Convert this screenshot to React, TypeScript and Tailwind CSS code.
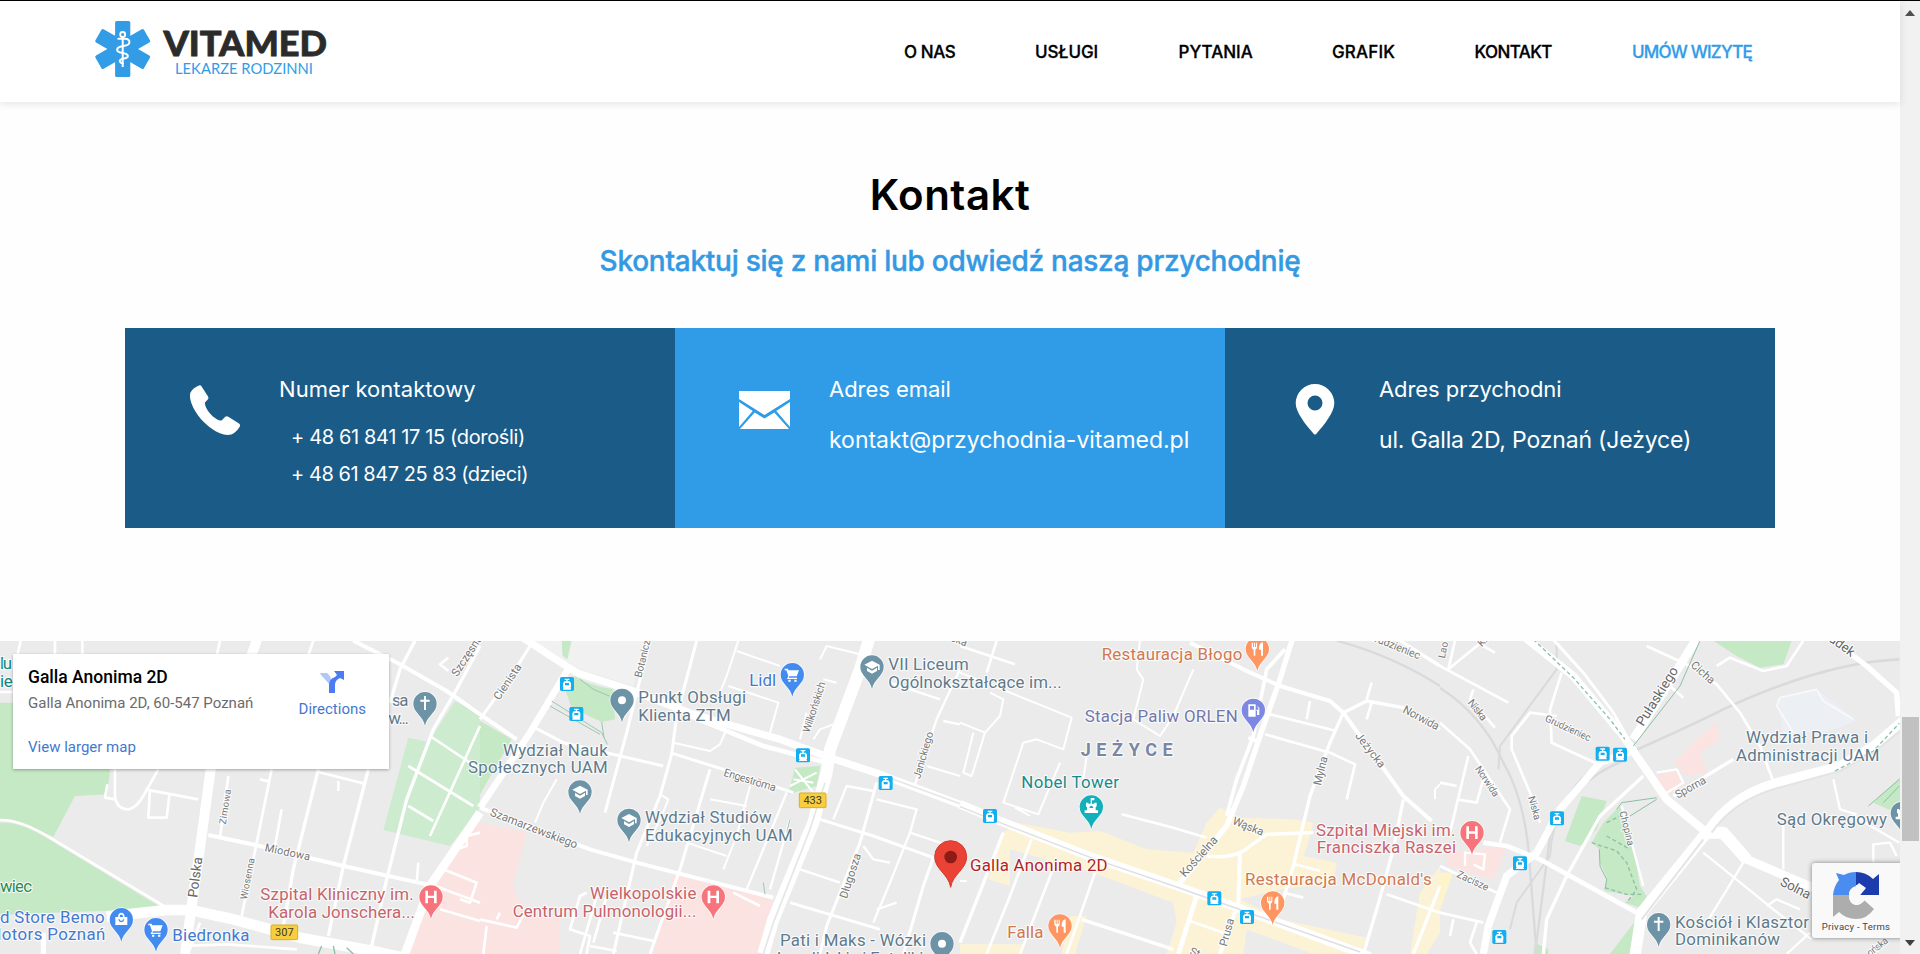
import type { ReactNode } from "react";

/* ---------- map geometry: four tiles, 3 units per pixel ---------- */
const TILES = [0, 480, 960, 1440];
const GREEN = "#c5e8c5";
const PINK = "#fbe3e2";
const SAND = "#fcf3d6";

type Area = { t: number; c: string; d: string };
const AREAS: Area[] = [
  { t: 0, c: GREEN, d: "M0 200H60L330 400L322 475L225 480L160 602L120 585Q60 550 0 548Z" },
  { t: 0, c: GREEN, d: "M0 560Q60 555 150 612L480 812L440 820L0 836Z" },
  { t: 0, c: "#cdebce", d: "M1365 195L1440 235V515L1350 630L1150 582L1225 305L1285 318Z" },
  { t: 0, c: PINK, d: "M1440 540L1290 760L1215 954H1440Z" },
  { t: 1, c: "#f1f1f1", d: "M160 14H500L460 150L300 100Z" },
  { t: 1, c: GREEN, d: "M245 14H275L262 70L248 60Z" },
  { t: 1, c: GREEN, d: "M285 120Q330 150 400 160L405 250L365 258L275 215L255 160Z" },
  { t: 1, c: GREEN, d: "M0 255L95 310L0 475Z" },
  { t: 1, c: PINK, d: "M0 560L140 590L100 750Q120 840 240 850V954H0Z" },
  { t: 1, c: PINK, d: "M580 715L880 790L840 954H520L560 800Z" },
  { t: 1, c: GREEN, d: "M945 395L1020 390L1010 450L925 475Z" },
  { t: 2, c: SAND, d: "M130 590L170 560L330 590L420 585L560 640L700 650L740 560L780 515L840 545L1000 550L1060 560L1050 600L1030 660L1130 680L1120 740L960 760L840 790L960 850L1220 905L1200 954H1060L860 880L850 954H620L650 860L640 800L400 710L150 640L150 750L85 730Z" },
  { t: 2, c: SAND, d: "M1380 770L1440 690V890L1400 954H1350Z" },
  { t: 2, c: SAND, d: "M380 840L345 954H305L330 840Z" },
  { t: 2, c: SAND, d: "M0 925H190V954H0Z" },
  { t: 3, c: GREEN, d: "M820 14H1055L1030 85L960 95L890 60Z" },
  { t: 3, c: GREEN, d: "M425 480L500 495L470 580L420 630L375 615Z" },
  { t: 3, c: GREEN, d: "M540 510L575 600L600 750L620 780L600 815L555 800L580 780L495 765L500 720L480 680L478 640L455 620L490 560Z" },
  { t: 3, c: GREEN, d: "M1380 425L1300 500L1380 535Z" },
  { t: 3, c: GREEN, d: "M590 850L510 954H600Z" },
  { t: 3, c: GREEN, d: "M285 920L325 940V954H280Z" },
  { t: 3, c: PINK, d: "M830 260L840 310L780 350L800 410L740 420L700 380L770 310Z" },
  { t: 3, c: PINK, d: "M650 410L710 400L730 450L660 490Z" },
  { t: 3, c: PINK, d: "M20 650L200 630L160 730L20 690Z" },
  { t: 3, c: "#fdf5c9", d: "M0 710L40 710L0 820Z" },
  { t: 3, c: "#eceff4", d: "M1010 190L1130 160L1250 255L1150 290L1030 290Z" },
];

type Road = { t: number; w: number; d: string; c?: string; dash?: string };
const RAILS: Road[] = [
  { t: 2, w: 7, d: "M1130 14Q1300 60 1440 150" },
  { t: 3, w: 7, d: "M0 155Q130 240 190 380Q260 500 270 700L290 954" },
  { t: 3, w: 6, d: "M350 14L350 100L180 330L175 400" },
  { t: 3, w: 8, d: "M570 350Q750 270 850 220Q1150 80 1378 70" },
  { t: 3, w: 7, d: "M560 370Q380 440 330 600L285 954" },
  { t: 3, w: 6, d: "M480 380Q340 480 330 660L230 800L210 880" },
];
const ROADS: Road[] = [
  { t: 0, w: 8, d: "M0 552Q60 550 150 605L500 815M345 400L345 480Q350 520 385 520Q410 515 430 480L475 400M345 490L315 485L322 445M435 460L595 490M450 460L445 545L500 545L508 478M0 168H60" },
  { t: 0, w: 30, d: "M775 0L632 400L605 600L575 810L555 954" },
  { t: 0, w: 32, d: "M320 842L500 822L570 822L700 850L900 905L1120 945L1210 965" },
  { t: 0, w: 12, d: "M625 597L780 630L1030 690L1280 745" },
  { t: 0, w: 8, d: "M660 605L685 420M815 400L770 620L725 840M780 430L808 436M955 408L1090 442M1015 435V465M845 520L825 630M940 14L900 130M660 14L650 60M62 14L52 60M165 14V60M247 14V60M1255 680L1250 740M600 860L570 940M545 930L680 925L890 940" },
  { t: 0, w: 10, d: "M955 400L880 700L850 870M1105 400L1030 690L985 900M1245 14L1200 100L1170 200M1440 30L1370 160L1300 280L1220 490L1160 730L1115 930" },
  { t: 0, w: 12, d: "M1060 14L1200 85L1340 165L1440 235L1550 310" },
  { t: 0, w: 8, d: "M1440 270L1290 600M1290 300L1440 400M1225 390L1420 510M1225 510L1300 555M1300 748L1440 800M1330 700L1430 740L1410 800L1380 790M1320 820L1440 855M1440 590L1400 600L1400 630L1370 640M1345 65L1320 85L1345 105" },
  { t: 0, w: 26, d: "M1440 530L1290 750L1215 954" },
  { t: 0, w: 16, d: "M130 890V954" },
  { t: 1, w: 12, d: "M0 515L330 640L470 680L880 785" },
  { t: 1, w: 22, d: "M120 0L290 110L460 165L640 235L760 270L900 310L1050 365L1200 415L1440 505" },
  { t: 1, w: 14, d: "M620 235L850 330L1040 380" },
  { t: 1, w: 36, d: "M1170 0L1140 100L1050 340L1040 410L1000 560L880 850L850 954" },
  { t: 1, w: 20, d: "M270 90L150 290L0 515" },
  { t: 1, w: 9, d: "M150 30L100 110L0 250M510 14L480 130L440 290L375 530M650 14L590 240L575 355L540 480L470 650L400 954M690 400L600 700L510 954M570 350L730 400L940 470M155 270L250 320L550 390" },
  { t: 1, w: 6, d: "M775 14L740 120L720 170M770 45L900 90M745 150L895 200L870 290M580 320L690 345L720 325L735 290M1020 70L1040 30L1140 55M1000 310L1020 280L1060 265M1030 130L1070 140M230 430L190 500L165 560M540 475L565 490L545 540L500 630M810 450L770 600L730 700M690 490L800 510M620 620L740 660M960 310L980 230" },
  { t: 1, w: 7, d: "M920 470L800 760M930 550L870 760M1060 550L1100 450L1180 465M1190 490L1310 520L1290 590L1440 640M1440 100L1370 250L1300 460M1340 390L1440 420M1290 590L1230 740L1180 860M960 700L1080 740M1230 140L1380 190M1390 255L1440 265M1150 630L1180 670L1230 680M1190 820L1250 800" },
  { t: 1, w: 9, d: "M1020 550L1180 600L1360 665L1330 750L1270 954M1190 440L1140 620L1040 870L1020 954M930 800L1200 880" },
  { t: 1, w: 8, d: "M0 850L110 875L130 835M20 870L10 954M50 850L60 830M320 770L300 780L270 880L330 900L320 954M350 780L300 954M400 890L520 915M330 930L410 945M380 780L340 920M760 770L840 810" },
  { t: 1, w: 6, d: "M945 400L1000 470M930 450L1010 410M940 430L1000 440" },
  { t: 2, w: 26, d: "M0 505L120 555L400 665L650 750L860 825L1230 962" },
  { t: 2, w: 16, d: "M1000 0L960 130L900 300L850 450L800 570L660 740" },
  { t: 2, w: 11, d: "M975 40L920 100L880 300L830 430L800 540M865 305L890 315" },
  { t: 2, w: 14, d: "M710 780L655 954" },
  { t: 2, w: 12, d: "M690 20L850 100L960 150L1110 195L1150 230L1200 300L1330 480L1415 555M840 650L835 800L780 954" },
  { t: 2, w: 10, d: "M1150 230L1220 195L1330 215L1440 280M1150 230L1110 320L1050 480L1000 690L970 790M1330 490L1300 640L1250 820L1210 954M740 660Q830 670 870 630L920 595L1060 590M130 590L0 920M1440 750L1360 954M365 850L640 940M1320 14L1440 90" },
  { t: 2, w: 8, d: "M485 535L640 575L740 605M1005 685L1080 705M970 770L1030 785M1280 775L1440 830M290 670L180 954M215 610L150 780L80 954M405 710L320 954M690 855L790 890M1220 190L1235 140M1235 200L1220 250M930 235L1130 285M915 295L1110 350L1185 385L1160 490M1050 195L1040 250M0 30L165 85M110 14L80 110" },
  { t: 2, w: 6, d: "M0 110L200 190L335 245L310 340L230 310L190 320L130 500L235 535L300 380M0 260L75 290L120 240L130 190L90 170M40 290L10 410L35 420L75 290M540 14L530 100L550 130L520 250L600 300L640 240L700 100M165 515L210 540M380 360L370 430M0 735H20M1440 445L1425 460V490" },
  { t: 3, w: 24, d: "M250 0L400 120L550 300L590 360L680 490L800 590" },
  { t: 3, w: 36, d: "M780 590H850L920 670" },
  { t: 3, w: 26, d: "M850 600L920 670L1120 755M775 0L700 120L580 310" },
  { t: 3, w: 9, d: "M330 0L430 110L520 230L565 310" },
  { t: 3, w: 22, d: "M590 340L480 380L360 520L290 650L200 720L145 870L130 954" },
  { t: 3, w: 10, d: "M610 420L480 540L380 720L320 850L310 954M700 480L880 370" },
  { t: 3, w: 14, d: "M130 620L200 630L300 670L590 830" },
  { t: 3, w: 34, d: "M800 590L605 830L585 960" },
  { t: 3, w: 28, d: "M800 590Q870 480 1010 440L1200 390L1300 330L1440 210" },
  { t: 3, w: 8, d: "M620 30L750 90L830 145L900 230L960 330L1005 450M830 90L870 65L970 105L1040 90L1090 14M365 110L330 220L335 320L465 380M350 240L270 230L215 300V340L270 470L300 560M690 150L730 185" },
  { t: 3, w: 16, d: "M1180 14L1280 90L1370 170L1375 240" },
  { t: 3, w: 8, d: "M0 90L205 200M25 100L130 14M25 100L45 14M100 160L90 190L165 275M130 30L165 50M0 260L90 340L210 520L180 620M85 360L30 590M0 440L50 450M50 490L110 500L130 430M0 690L170 770M0 830L130 860M40 850L30 900M110 860L90 920L110 954" },
  { t: 3, w: 7, d: "M650 410L710 400L730 440L680 470M75 690V650L135 655L130 700L100 685M1180 430L1200 520L1250 535M1030 560V700M790 650L1000 820L1115 910M910 680L800 860M980 810L1010 790L1080 820M1040 954L1110 890M1300 680V625L1350 620L1370 660M1240 540L1378 620M545 510L610 750" },
  { t: 3, w: 5, c: "#f8f9fb", d: "M1060 290L1010 210L1020 185L1130 160L1150 195L1240 250" },
];
const DETAILS: Road[] = [
  { t: 1, w: 5, c: "#e6e6e6", d: "M1035 440L990 580L880 860L850 954M1240 430L1440 503" },
  { t: 2, w: 4, c: "#dedfe3", d: "M0 512L120 560L400 668L650 753L860 828L1200 948" },
  { t: 3, w: 6, c: "#e4e4e4", d: "M790 610L605 850M815 590Q880 495 1010 457L1200 405L1300 350L1380 285" },
  { t: 1, w: 3, c: "#9cc7ae", d: "M215 195L365 290L382 325M210 210L360 295M300 130L340 160L400 185M365 258L372 305M930 550L920 590M850 740L855 775" },
  { t: 3, w: 4, c: "#8cc0a4", dash: "12 8", d: "M280 10L400 125L510 250L555 310M1185 405L1300 345L1378 262M455 620L530 645L560 680L590 760L560 800M495 755L560 775L610 775M500 560L560 530M500 600L570 640" },
  { t: 3, w: 3, c: "#8cbfa4", d: "M780 14L720 150L580 330M545 500L650 485M570 540L650 490M545 500L530 520M1378 430L1285 510M478 640L480 690L500 730L495 760M1378 450L1330 500" },
  { t: 0, w: 4, c: "#8cc0a4", d: "M965 930L955 954M1000 930L1005 954M1040 935L1060 954" },
];

const Lines = ({ roads, color }: { roads: Road[]; color: string }) => (
  <>
    {roads.map((r, i) => (
      <path
        key={i}
        transform={`translate(${TILES[r.t] * 3} 0)`}
        d={r.d}
        fill="none"
        stroke={r.c ?? color}
        strokeWidth={r.w}
        strokeDasharray={r.dash}
        strokeLinejoin="round"
      />
    ))}
  </>
);

/* ---------- labels ---------- */
type Label = { t: number; x: number; y: number; s: string; len?: number; c: string; z?: number; r?: number; bold?: boolean };
const SLATE = "#5f7a8c";
const BLUE = "#4479d0";
const RED = "#c6636b";
const ORANGE = "#d0784f";
const ROAD = "#777777";
const LABELS: Label[] = [
  { t: 0, x: 0, y: 100, s: "lu", c: "#12837f", len: 36 },
  { t: 0, x: 0, y: 153, s: "ie", c: "#12837f", len: 38 },
  { t: 0, x: 1176, y: 210, s: "sa", c: SLATE, len: 49 },
  { t: 0, x: 1165, y: 264, s: "w...", c: SLATE, len: 62 },
  { t: 0, x: 0, y: 769, s: "wiec", c: "#2f8a55", len: 96 },
  { t: 0, x: 0, y: 861, s: "d Store Bemo", c: BLUE, len: 314 },
  { t: 0, x: -8, y: 912, s: "lotors Poznań", c: BLUE, len: 324 },
  { t: 0, x: 517, y: 916, s: "Biedronka", c: BLUE, len: 231 },
  { t: 0, x: 781, y: 792, s: "Szpital Kliniczny im.", c: RED, len: 460 },
  { t: 0, x: 805, y: 845, s: "Karola Jonschera...", c: RED, len: 440 },
  { t: 1, x: 475, y: 202, s: "Punkt Obsługi", c: SLATE, len: 323 },
  { t: 1, x: 475, y: 254, s: "Klienta ZTM", c: SLATE, len: 277 },
  { t: 1, x: 69, y: 360, s: "Wydział Nauk", c: SLATE, len: 314 },
  { t: 1, x: -36, y: 412, s: "Społecznych UAM", c: SLATE, len: 419 },
  { t: 1, x: 495, y: 562, s: "Wydział Studiów", c: SLATE, len: 380 },
  { t: 1, x: 495, y: 614, s: "Edukacyjnych UAM", c: SLATE, len: 443 },
  { t: 1, x: 808, y: 151, s: "Lidl", c: BLUE, len: 80 },
  { t: 1, x: 1225, y: 103, s: "VII Liceum", c: SLATE, len: 241 },
  { t: 1, x: 1225, y: 155, s: "Ogólnokształcące im...", c: SLATE, len: 520 },
  { t: 1, x: 330, y: 790, s: "Wielkopolskie", c: RED, len: 319 },
  { t: 1, x: 98, y: 844, s: "Centrum Pulmonologii...", c: RED, len: 551 },
  { t: 1, x: 900, y: 931, s: "Pati i Maks - Wózki", c: SLATE, len: 438 },
  { t: 1, x: 890, y: 984, s: "Inwalidzkie i Foteliki", c: SLATE, len: 440 },
  { t: 2, x: 425, y: 73, s: "Restauracja Błogo", c: ORANGE, len: 422 },
  { t: 2, x: 374, y: 258, s: "Stacja Paliw ORLEN", c: "#7277ad", len: 459 },
  { t: 2, x: 362, y: 360, s: "JEŻYCE", c: "#7b86a3", len: 276, bold: true, z: 54 },
  { t: 2, x: 184, y: 457, s: "Nobel Tower", c: "#178a8c", len: 293 },
  { t: 2, x: 30, y: 706, s: "Galla Anonima 2D", c: "#b31f24", len: 413 },
  { t: 2, x: 142, y: 905, s: "Falla", c: ORANGE, len: 108 },
  { t: 2, x: 1068, y: 600, s: "Szpital Miejski im.", c: RED, len: 418 },
  { t: 2, x: 1070, y: 652, s: "Franciszka Raszei", c: RED, len: 418 },
  { t: 2, x: 855, y: 746, s: "Restauracja McDonald's", c: ORANGE, len: 560 },
  { t: 3, x: 918, y: 322, s: "Wydział Prawa i", c: SLATE, len: 366 },
  { t: 3, x: 888, y: 375, s: "Administracji UAM", c: SLATE, len: 430 },
  { t: 3, x: 1010, y: 566, s: "Sąd Okręgowy", c: SLATE, len: 331 },
  { t: 3, x: 705, y: 875, s: "Kościół i Klasztor", c: SLATE, len: 402 },
  { t: 3, x: 705, y: 927, s: "Dominikanów", c: SLATE, len: 315 },
];
const STREETS: Label[] = [
  { t: 0, x: 1372, y: 124, s: "Szczęsna", c: ROAD, z: 34, r: -57, len: 140 },
  { t: 0, x: 677, y: 566, s: "Zimowa", c: ROAD, z: 29, r: -81, len: 106 },
  { t: 0, x: 592, y: 786, s: "Polska", c: "#666666", z: 41, r: -83, len: 122 },
  { t: 0, x: 740, y: 792, s: "Wiosenna", c: ROAD, z: 29, r: -79, len: 126 },
  { t: 0, x: 793, y: 645, s: "Miodowa", c: ROAD, z: 33, r: 12, len: 138 },
  { t: 1, x: 58, y: 194, s: "Cienista", c: ROAD, z: 34, r: -56, len: 122 },
  { t: 1, x: 484, y: 126, s: "Botanicz", c: ROAD, z: 31, r: -76, len: 115 },
  { t: 1, x: 988, y: 292, s: "Wilkońskich", c: ROAD, z: 32, r: -72, len: 158 },
  { t: 1, x: 1320, y: 430, s: "Janickiego", c: ROAD, z: 32, r: -74, len: 145 },
  { t: 1, x: 1100, y: 790, s: "Długosza", c: ROAD, z: 34, r: -72, len: 140 },
  { t: 1, x: 729, y: 419, s: "Engeströma", c: ROAD, z: 33, r: 17, len: 162 },
  { t: 1, x: 28, y: 538, s: "Szamarzewskiego", c: ROAD, z: 35, r: 21, len: 278 },
  { t: 2, x: 675, y: 725, s: "Kościelna", c: ROAD, z: 36, r: -48, len: 150 },
  { t: 2, x: 815, y: 563, s: "Wąska", c: ROAD, z: 34, r: 22, len: 98 },
  { t: 2, x: 800, y: 933, s: "Prusa", c: ROAD, z: 34, r: -75, len: 85 },
  { t: 2, x: 1082, y: 450, s: "Mylna", c: ROAD, z: 34, r: -76, len: 88 },
  { t: 2, x: 1184, y: 300, s: "Jeżycka", c: ROAD, z: 34, r: 52, len: 124 },
  { t: 2, x: 1326, y: 228, s: "Norwida", c: ROAD, z: 34, r: 28, len: 118 },
  { t: 2, x: 1222, y: 8, s: "Grudzieniec", c: ROAD, z: 33, r: 22, len: 166 },
  { t: 2, x: 688, y: 954, s: "St", c: ROAD, z: 32, r: 20 },
  { t: 2, x: -30, y: 14, s: "ska", c: ROAD, z: 32, r: 20 },
  { t: 3, x: 14, y: 68, s: "Lao", c: ROAD, z: 30, r: -78 },
  { t: 3, x: 125, y: 34, s: "K.", c: ROAD, z: 30, r: -45 },
  { t: 3, x: 82, y: 200, s: "Niska", c: ROAD, z: 32, r: 52, len: 72 },
  { t: 3, x: 104, y: 398, s: "Norwida", c: ROAD, z: 30, r: 56, len: 104 },
  { t: 3, x: 264, y: 484, s: "Niska", c: ROAD, z: 30, r: 74, len: 72 },
  { t: 3, x: 313, y: 254, s: "Grudzieniec", c: ROAD, z: 30, r: 25, len: 148 },
  { t: 3, x: 610, y: 273, s: "Pułaskiego", c: "#666666", z: 41, r: -58, len: 200 },
  { t: 3, x: 750, y: 90, s: "Cicha", c: ROAD, z: 34, r: 42, len: 84 },
  { t: 3, x: 1165, y: 14, s: "adek", c: "#666666", z: 40, r: 36, len: 84 },
  { t: 3, x: 713, y: 488, s: "Sporna", c: ROAD, z: 34, r: -29, len: 100 },
  { t: 3, x: 538, y: 528, s: "Chopina", c: ROAD, z: 30, r: 76, len: 106 },
  { t: 3, x: 48, y: 722, s: "Zacisze", c: ROAD, z: 31, r: 25, len: 102 },
  { t: 3, x: 1018, y: 746, s: "Solna", c: "#666666", z: 40, r: 27, len: 96 },
  { t: 3, x: 1290, y: 962, s: "ońska", c: ROAD, z: 30, r: -38, len: 72 },
];
const MapText = ({ l }: { l: Label }) => (
  <text
    transform={`translate(${TILES[l.t] * 3 + l.x} ${l.y}) rotate(${l.r ?? 0})`}
    fontSize={l.z ?? 50.5}
    fill={l.c}
    stroke="#ffffff"
    strokeOpacity={0.75}
    strokeWidth={7}
    strokeLinejoin="round"
    paintOrder="stroke"
    textLength={l.len}
    fontWeight={l.bold ? 700 : 400}
  >
    {l.s}
  </text>
);

/* ---------- pins ---------- */
const GLYPHS: Record<string, ReactNode> = {
  cap: <path fill="#fff" d="M0 16L-23 28L0 41L18 31V44H23V28ZM-15 37V47L0 55L15 47V37L0 46Z" />,
  cross: <path fill="#fff" d="M-3 12H3V23H14V29H3V54H-3V29H-14V23H-3Z" />,
  h: <path fill="#fff" d="M-17 16H-9V31H9V16H17V54H9V38H-9V54H-17Z" />,
  dot: <circle cy="35" r="12" fill="#fff" />,
  cart: <path fill="#fff" d="M-23 17H-14L-11 22H20L13 40H-9L-11 44H14V48H-16L-12 39L-18 22H-23ZM-12 50h7v6h-7ZM6 50h7v6h-7Z" />,
  bag: <path fill="#fff" fillRule="evenodd" d="M-18 27H-10C-10 10 10 10 10 27H18V51H-18ZM-5 27H5C5 17 -5 17 -5 27ZM-9 34C-7 46 7 46 9 34H5C4 40 -4 40 -5 34Z" />,
  food: <path fill="#fff" d="M-17 16V30Q-16 36 -11 37V55H-6V37Q-1 36 -1 30V16H-4V29H-7V16H-10V29H-13V16ZM17 15C8 16 5 24 5 37H11V55H17Z" />,
  gas: <path fill="#fff" fillRule="evenodd" d="M-15 17H7V54H-15ZM-10 22V33H2V22ZM10 22L18 27V49H11V36H9V33H15V29Z" />,
  castle: <path fill="#fff" fillRule="evenodd" d="M-16 22H-9V25H-2V8H9V15H2V25H9V22H16V33L13 36V45H20V53H-20V45H-13V36L-16 33ZM0 31A7 7 0 0 0 -6 38H6A7 7 0 0 0 0 31Z" />,
};
const PINS: { t: number; x: number; y: number; c: string; g: string }[] = [
  { t: 0, x: 1275, y: 168, c: "#6d93a6", g: "cross" },
  { t: 0, x: 364, y: 816, c: "#448bf0", g: "bag" },
  { t: 0, x: 468, y: 846, c: "#448bf0", g: "cart" },
  { t: 0, x: 1293, y: 748, c: "#f8747c", g: "h" },
  { t: 1, x: 426, y: 158, c: "#6d93a6", g: "dot" },
  { t: 1, x: 300, y: 433, c: "#6d93a6", g: "cap" },
  { t: 1, x: 447, y: 518, c: "#6d93a6", g: "cap" },
  { t: 1, x: 937, y: 81, c: "#448bf0", g: "cart" },
  { t: 1, x: 1176, y: 58, c: "#6d93a6", g: "cap" },
  { t: 1, x: 700, y: 748, c: "#f8747c", g: "h" },
  { t: 1, x: 1386, y: 888, c: "#6d93a6", g: "dot" },
  { t: 2, x: 892, y: 4, c: "#ff9560", g: "food" },
  { t: 2, x: 880, y: 188, c: "#7d88e3", g: "gas" },
  { t: 2, x: 394, y: 478, c: "#12b0ba", g: "castle" },
  { t: 2, x: 300, y: 835, c: "#ff9560", g: "food" },
  { t: 2, x: 938, y: 766, c: "#ff9560", g: "food" },
  { t: 3, x: 96, y: 555, c: "#f8747c", g: "h" },
  { t: 3, x: 656, y: 831, c: "#6d93a6", g: "cross" },
  { t: 3, x: 1387, y: 497, c: "#6d93a6", g: "castle" },
];
const TRAMS: [number, number, number][] = [
  [1, 261, 144], [1, 289, 234], [1, 969, 358], [1, 1217, 441],
  [2, 90, 540], [2, 763, 787], [2, 861, 843],
  [3, 488, 353], [3, 540, 356], [3, 351, 547], [3, 240, 682], [3, 178, 903],
];

const CityMap = () => (
  <svg viewBox="0 15 5700 939" className="block h-[313px] w-[1900px] font-['Roboto',sans-serif]">
    <rect width="5700" height="960" fill="#ebebeb" />
    {AREAS.map((a, i) => (
      <path key={i} transform={`translate(${TILES[a.t] * 3} 0)`} d={a.d} fill={a.c} />
    ))}
    <Lines roads={RAILS} color="#d9dadb" />
    <Lines roads={ROADS} color="#ffffff" />
    <Lines roads={DETAILS} color="#dddddd" />
    {STREETS.map((l, i) => <MapText key={i} l={l} />)}
    {[[0, 853, 889, "307"], [1, 998, 493, "433"]].map(([t, x, y, s]) => (
      <g key={s} transform={`translate(${TILES[t as number] * 3 + (x as number)} ${y})`}>
        <rect x="-40" y="-22" width="80" height="44" rx="3" fill="#f8cd3e" stroke="#d9ae27" strokeWidth="3" />
        <text y="12" textAnchor="middle" fontSize="33" fill="#3c3a2c">{s}</text>
      </g>
    ))}
    {LABELS.map((l, i) => <MapText key={i} l={l} />)}
    {TRAMS.map(([t, x, y], i) => (
      <g key={i} transform={`translate(${TILES[t] * 3 + x} ${y})`}>
        <rect x="-21" y="-21" width="42" height="42" rx="5" fill="#12aef0" />
        <path fill="#fff" fillRule="evenodd" d="M-7 -16H7V-12H2V-8H8L12 -2V10L9 13H12V17H-12V13H-9L-12 10V-2L-8 -8H-2V-12H-7ZM-6 -3V4H6V-3Z" />
      </g>
    ))}
    {PINS.map((p, i) => (
      <g key={i} transform={`translate(${TILES[p.t] * 3 + p.x} ${p.y})`}>
        <path
          d="M0 101C-5 72 -35 62 -35 35A35 35 0 1 1 35 35C35 62 5 72 0 101Z"
          fill={p.c}
          stroke="#fff"
          strokeWidth="5"
          strokeOpacity=".8"
          paintOrder="stroke"
        />
        {GLYPHS[p.g]}
      </g>
    ))}
    <g transform="translate(2852 614)">
      <path d="M0 140C-6 100 -48 86 -48 48A48 48 0 1 1 48 48C48 86 6 100 0 140Z" fill="#ea4335" stroke="#d23a2e" strokeWidth="3" />
      <circle cy="49" r="19" fill="#8c1a17" />
    </g>
  </svg>
);

/* ---------- page ---------- */
const Logo = () => (
  <svg viewBox="0 0 240 60" className="ml-[94px] mt-[-5px] h-[60px] w-[240px] shrink-0">
    <g transform="translate(28.7 30)">
      {[0, 60, 120].map((a) => (
        <rect key={a} x="-7.6" y="-28" width="15.2" height="56" rx="1.6" fill="#329ce6" transform={`rotate(${a})`} />
      ))}
      <circle cy="-14.5" r="2.5" fill="none" stroke="#fff" strokeWidth="1.8" />
      <path d="M0 -12V18" stroke="#fff" strokeWidth="2" />
      <path
        d="M-4.500 -10.300H2.500C8 -10 8 -4.500 3 -3.500L-2.500 -2.200C-6.500 -1 -6.500 2.200 -3 3.200L2.500 4.600C6 5.600 6 8.500 2.500 9.300L-1.500 10.300C-4 11.500 -3 14 0 14.500"
        fill="none"
        stroke="#fff"
        strokeWidth="2"
        strokeLinecap="round"
      />
    </g>
    <text x="69.500" y="36.500" fontFamily="Lato, sans-serif" fontWeight="900" fontSize="34.500" fill="#2b2b2b" stroke="#2b2b2b" strokeWidth=".8" textLength="163.500" lengthAdjust="spacingAndGlyphs">
      VITAMED
    </text>
    <text x="81" y="55" fontFamily="Lato, sans-serif" fontSize="15" fill="#329ce6" textLength="138" lengthAdjust="spacingAndGlyphs">
      LEKARZE RODZINNI
    </text>
  </svg>
);

const Card = ({ tone, icon, title, titleClass, children }: { tone: string; icon: ReactNode; title: string; titleClass: string; children: ReactNode }) => (
  <div className={`flex h-[200px] w-[550px] pt-[46px] text-white ${tone}`}>
    <div className="flex w-[154px] shrink-0 justify-start pl-16 pt-[10px]">{icon}</div>
    <div className="whitespace-nowrap">
      <h3 className={`text-[22px] leading-[30px] ${titleClass}`}>{title}</h3>
      {children}
    </div>
  </div>
);

export default function App() {
  return (
    <div className="flex h-[954px] w-[1920px] flex-col overflow-hidden bg-[#fefefe] font-['Inter',sans-serif]">
      <div className="h-px shrink-0 bg-black" />
      <div className="flex min-h-0 flex-1">
        <div className="flex w-[1900px] flex-col">
          <header className="z-10 flex h-[101px] shrink-0 items-center bg-white shadow-[0_2px_8px_rgba(0,0,0,0.1)]">
            <Logo />
            <nav className="ml-[570px] flex gap-20 whitespace-nowrap pt-[3px] text-[17px] font-medium text-black [-webkit-text-stroke:0.3px]">
              <a className="w-[51px] tracking-[-0.4px]">O NAS</a>
              <a className="w-[63.500px] tracking-[-0.1px]">USŁUGI</a>
              <a className="w-[73.500px]">PYTANIA</a>
              <a className="w-[62.500px] tracking-[0.15px]">GRAFIK</a>
              <a className="w-[77.500px] tracking-[-0.6px]">KONTAKT</a>
              <a className="tracking-[-0.78px] text-[#329ce6]">UMÓW WIZYTĘ</a>
            </nav>
          </header>
          <main className="flex flex-1 flex-col items-center pt-[68px]">
            <h1 className="text-[42px] font-semibold leading-[50px] tracking-[0.5px] text-black">Kontakt</h1>
            <h2 className="mt-[21px] text-[28px] font-medium leading-[40px] tracking-[-0.26px] text-[#3399e3] [-webkit-text-stroke:0.4px]">
              Skontaktuj się z nami lub odwiedź naszą przychodnię
            </h2>
            <section className="mt-[47px] flex">
              <Card
                tone="bg-[#1a5b87]"
                title="Numer kontaktowy"
                titleClass="tracking-[0.05px]"
                icon={
                  <svg viewBox="0 0 52 52" className="h-[52px] w-[52px]">
                    <path
                      fill="#fff"
                      d="M10 1.500Q11.500 .8 12.300 2L19 12.500Q20 14.300 18.700 15.500L16 18.500C15.500 21 17.500 25.500 21 29.500C25 34 29.500 36.800 32.500 36.500L36 33Q37.500 31.800 39.300 32.800L50 39.500Q52 41 50.500 43C47.500 47.500 44 51 38.500 51C29 50.500 17 42 9.500 32C3 23.500 -.5 13.500 1.500 8.500C3 5 6.500 3 10 1.500Z"
                    />
                  </svg>
                }
              >
                <div className="ml-3 mt-[15px] text-[20px] leading-[37px]">
                  <p className="tracking-[-0.36px]">+ 48 61 841 17 15 (dorośli)</p>
                  <p className="tracking-[-0.46px]">+ 48 61 847 25 83 (dzieci)</p>
                </div>
              </Card>
              <Card
                tone="bg-[#309ce7]"
                title="Adres email"
                titleClass="tracking-[-0.05px]"
                icon={
                  <svg viewBox="0 0 52 52" className="h-[52px] w-[51px]" preserveAspectRatio="none">
                    <path fill="#fff" d="M0 7H52V15L26 31L0 15ZM0 18L14 27L0 43ZM52 18L38 27L52 43ZM16 28.500L26 34.500L36 28.500L51 45H1Z" />
                  </svg>
                }
              >
                <p className="mt-[21px] text-[23px] leading-[30px] tracking-[-0.01px]">kontakt@przychodnia-vitamed.pl</p>
              </Card>
              <Card
                tone="bg-[#1a5b87]"
                title="Adres przychodni"
                titleClass="tracking-[-0.07px]"
                icon={
                  <svg viewBox="0 0 52 52" className="h-[52px] w-[52px]">
                    <path
                      fill="#fff"
                      fillRule="evenodd"
                      d="M26 0A19.300 19.300 0 0 1 45.300 19.300C45.300 28 36 40 27.200 50Q26 51.200 24.800 50C16 40 6.700 28 6.700 19.300A19.300 19.300 0 0 1 26 0ZM26 11.500A7.500 7.500 0 1 0 26 26.500A7.500 7.500 0 1 0 26 11.500Z"
                    />
                  </svg>
                }
              >
                <p className="mt-[21px] text-[23px] leading-[30px] tracking-[-0.18px]">ul. Galla 2D, Poznań (Jeżyce)</p>
              </Card>
            </section>
          </main>
          <section className="relative h-[313px] shrink-0 overflow-hidden">
            <CityMap />
            <div className="absolute left-[13px] top-[13px] flex h-[115px] w-[376px] justify-between bg-white pl-[15px] pr-[23px] pt-[12px] font-['Roboto',sans-serif] shadow-[0_1px_3px_rgba(0,0,0,0.3)]">
              <div className="whitespace-nowrap">
                <p className="text-[17.500px] font-medium leading-[22px] text-black">Galla Anonima 2D</p>
                <p className="mt-[5px] text-[15px] leading-[20px] text-[#6b6b6b]">Galla Anonima 2D, 60-547 Poznań</p>
                <p className="mt-[24px] text-[15px] leading-[20px] text-[#4478d0]">View larger map</p>
              </div>
              <div className="flex flex-col items-center pt-1">
                <svg viewBox="0 0 24 24" className="h-6 w-6">
                  <path d="M10 22V15L1 5L0 3H7L10 6L12 12L14 14V22Z" fill="#b0c8f8" />
                  <path d="M9 23V15Q9 9 15 7L17 5L14 1H24V10L20 8Q15 10 15 15V23Z" fill="#4c7df0" />
                </svg>
                <p className="mt-[5px] text-[15px] leading-[20px] text-[#4478d0]">Directions</p>
              </div>
            </div>
            <div className="absolute left-[1812px] top-[222px] flex h-[75px] w-[92px] flex-col items-center rounded-[3px] bg-[#f9f9f9] pr-1 pt-2 shadow-[0_0_5px_gray]">
              <svg viewBox="0 0 48 48" className="h-12 w-12">
                <path d="M24 1V16Q17 17 17 24H1Q2 15 7 9L4 2L12 4Q17 1 24 1Z" fill="#4a8cf0" />
                <path d="M24 1Q34 1 41 8L47 3V24H28L33 18Q30 14 24 14Z" fill="#1c3cae" />
                <path d="M1 24H17Q17 33 24 34Q29 34 32 29L42 38Q35 48 24 48Q14 48 7 41L1 46Z" fill="#adadad" />
                <path d="M17 24Q17 17 24 15L27 12L34 17L28 24L33 29Q29 34 24 34Q17 33 17 24Z" fill="#f9f9f9" />
              </svg>
              <p className="mt-[1px] whitespace-nowrap font-['Roboto',sans-serif] text-[9.500px] leading-[14px] tracking-[0.25px] text-[#444]">Privacy - Terms</p>
            </div>
          </section>
        </div>
        <aside className="flex w-5 flex-col items-center bg-[#f1f1f1] pb-2 pt-[9px]">
          <svg viewBox="0 0 10 6" className="h-[6px] w-[10px]"><path d="M5 0L10 6H0Z" fill="#505050" /></svg>
          <div className="mt-[701px] h-[124px] w-[17px] bg-[#c1c1c1]" />
          <svg viewBox="0 0 10 6" className="mt-auto h-[6px] w-[10px]"><path d="M0 0H10L5 6Z" fill="#404040" /></svg>
        </aside>
      </div>
    </div>
  );
}
